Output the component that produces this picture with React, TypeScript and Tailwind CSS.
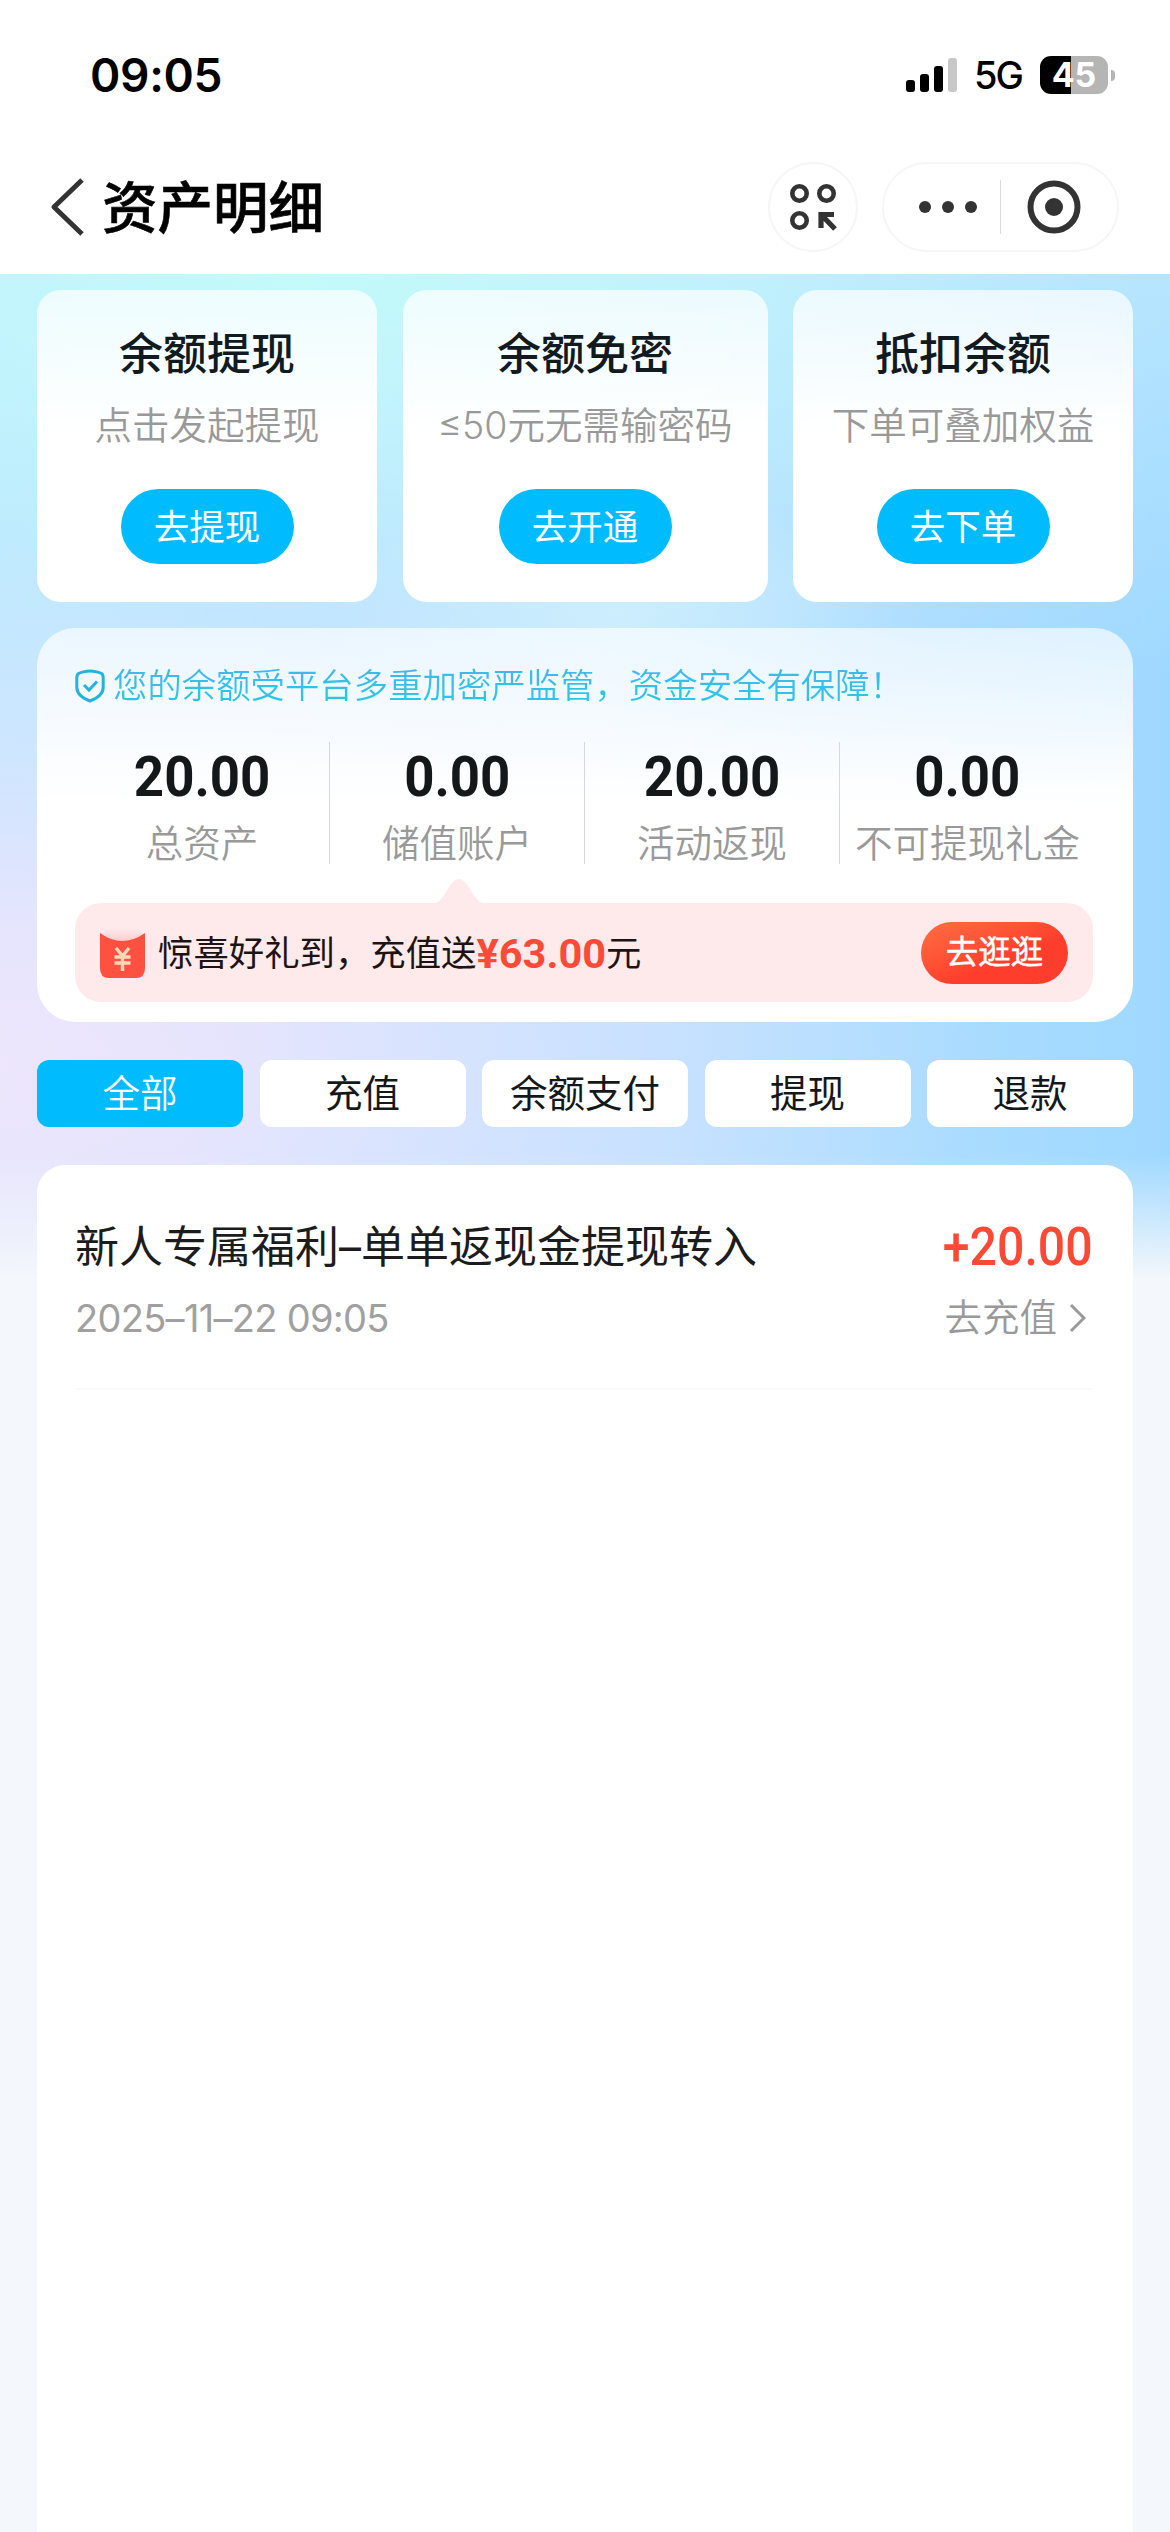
import React, { useState } from "react";

const actions = [
  { title: "余额提现", desc: "点击发起提现", button: "去提现", width: "w-[340px]" },
  { title: "余额免密", desc: "≤50元无需输密码", button: "去开通", width: "w-[365px]" },
  { title: "抵扣余额", desc: "下单可叠加权益", button: "去下单", width: "w-[340px]" },
];

const stats = [
  { value: "20.00", label: "总资产" },
  { value: "0.00", label: "储值账户" },
  { value: "20.00", label: "活动返现" },
  { value: "0.00", label: "不可提现礼金" },
];

const tabs = ["全部", "充值", "余额支付", "提现", "退款"];

const StatusBar = () => {
  return (
    <div className="flex h-[150px] items-center justify-between pl-[90px] pr-[55px]">
      <span className="text-[46px] leading-none font-semibold tracking-[-0.3px]">
        09:05
      </span>
      <div className="flex items-center">
        <svg width="51" height="34" viewBox="0 0 51 34">
          <rect x="0" y="22" width="9" height="12" rx="3" />
          <rect x="14" y="16" width="9" height="18" rx="3" />
          <rect x="28" y="8" width="9" height="26" rx="3" />
          <rect x="42" y="0" width="9" height="34" rx="3" fill="#c8c8c8" />
        </svg>
        <span className="ml-[17px] text-[38px] leading-none font-medium tracking-[-2px]">
          5G
        </span>
        <div className="ml-[18px] flex h-[38px] w-[68px] items-center justify-center rounded-[11px] bg-[linear-gradient(90deg,#000_46%,#b5b5b5_46%)] text-[34px] leading-none font-bold text-white">
          45
        </div>
        <div className="ml-[3px] h-[11px] w-[4px] rounded-r-full bg-[#b5b5b5]" />
      </div>
    </div>
  );
};

const NavBar = () => {
  return (
    <div className="flex h-[124px] items-start pt-[12px] pl-[50px]">
      <svg className="mt-[16px]" width="34" height="58" viewBox="0 0 34 58" fill="none" stroke="#333" strokeWidth="5" strokeLinejoin="round">
        <path d="M32 2L4 29L32 56" />
      </svg>
      <h1 className="ml-[18px] text-[55.5px] leading-[91px] font-medium [-webkit-text-stroke:0.6px_#000]">
        资产明细
      </h1>
      <button className="ml-[444px] flex size-[90px] items-center justify-center rounded-full border-2 border-[#f6f6f6]">
        <svg width="48" height="54" viewBox="0 0 48 54" fill="none" stroke="#333" strokeWidth="4.600">
          <circle cx="10.500" cy="13.500" r="7.200" />
          <circle cx="37.500" cy="13.500" r="7.200" />
          <circle cx="10.500" cy="40.500" r="7.200" />
          <path d="M32 48V34.500H45M33 35.500L46 49" strokeWidth="5.200" />
        </svg>
      </button>
      <div className="ml-[24px] flex h-[90px] w-[237px] items-center rounded-full border-2 border-[#f6f6f6]">
        <div className="flex flex-1 items-center gap-[11px] pl-[35px]">
          <span className="size-[12px] rounded-full bg-[#333]" />
          <span className="size-[12px] rounded-full bg-[#333]" />
          <span className="size-[12px] rounded-full bg-[#333]" />
        </div>
        <div className="h-[54px] w-[1.5px] bg-[#dcdcdc]" />
        <div className="flex w-[116px] items-center pl-[26px]">
          <svg width="54" height="54" viewBox="0 0 54 54">
            <circle cx="27" cy="27" r="23.500" fill="none" stroke="#333" strokeWidth="6" />
            <circle cx="27" cy="27" r="9" fill="#333" />
          </svg>
        </div>
      </div>
    </div>
  );
};

const RedPacket = () => {
  return (
    <svg width="45" height="50" viewBox="0 0 45 50">
      <defs>
        <linearGradient id="flap" x1="0" y1="0" x2="0" y2="1">
          <stop offset="0" stopColor="#feeaeb" />
          <stop offset="1" stopColor="#fbc4c2" />
        </linearGradient>
      </defs>
      <path d="M4 6Q4 0 12 0H33Q41 0 41 6V18H4Z" fill="url(#flap)" />
      <path d="M0 5Q22 21 45 5V40Q45 50 36 50H9Q0 50 0 40Z" fill="#fe5142" />
      <path d="M16 20L22.500 28L29 20M14.500 29H30.500M14.500 35H30.500M22.500 28V43" fill="none" stroke="#fdd9b8" strokeWidth="3.400" />
    </svg>
  );
};

const App = () => {
  const [activeTab, setActiveTab] = useState("全部");

  return (
    <div className="flex h-[2532px] w-[1170px] flex-col overflow-hidden bg-white font-['Inter','Noto_Sans_CJK_SC',sans-serif] text-black">
      <StatusBar />
      <NavBar />

      <div className="flex flex-1 flex-col bg-[#f4f7fb] bg-[linear-gradient(180deg,rgba(244,247,251,0)_0,rgba(244,247,251,0)_880px,#f4f7fb_1005px),radial-gradient(ellipse_980px_540px_at_0px_790px,#ede6fc_0%,rgba(234,228,253,0.9)_25%,rgba(220,226,255,0.55)_58%,rgba(210,225,255,0)_100%),radial-gradient(ellipse_300px_130px_at_620px_340px,rgba(212,243,252,0.7)_0%,rgba(212,243,252,0)_100%),radial-gradient(ellipse_820px_320px_at_300px_0px,#c3fafa_0%,rgba(196,250,250,0.7)_35%,rgba(196,250,250,0)_100%),linear-gradient(180deg,rgba(190,234,255,0.75)_0,rgba(190,234,255,0)_400px),linear-gradient(90deg,#bdeaff_0%,#bde2ff_50%,#9fd8ff_100%)] bg-no-repeat px-[37px] pt-[16px]">
        <div className="flex justify-between">
          {actions.map((item) => (
            <div
              key={item.title}
              className={`${item.width} flex h-[312px] flex-col items-center rounded-[24px] bg-linear-to-b from-white/70 to-white to-45% pt-[34px]`}
            >
              <h2 className="text-[44px] leading-[60px] font-medium text-[#111a1e]">
                {item.title}
              </h2>
              <p className="mt-[14px] text-[37.5px] leading-[56px] font-[350] whitespace-nowrap text-[#999]">
                {item.desc}
              </p>
              <button className="mt-[35px] h-[75px] w-[173px] rounded-full bg-[#00bcff] pt-[2px] text-[35.5px] leading-[73px] text-white">
                {item.button}
              </button>
            </div>
          ))}
        </div>

        <div className="mt-[26px] flex h-[394px] flex-col rounded-[38px] bg-linear-to-b from-white/65 to-white to-45% pt-[34px] pr-[40px] pl-[38px]">
          <div className="flex h-[48px] items-center">
            <svg width="30" height="34" viewBox="0 0 30 34" fill="none" stroke="#22b4dc" strokeWidth="3">
              <path d="M15 2C11 2 5 3.500 3.500 4.500C2 5.500 1.800 6.500 1.800 9V18C1.800 25 8 29.500 15 32C22 29.500 28.200 25 28.200 18V9C28.200 6.500 28 5.500 26.500 4.500C25 3.500 19 2 15 2Z" />
              <path d="M9 16L14 21L22 12.500" />
            </svg>
            <span className="ml-[8px] bg-linear-to-b from-[#45b4f0] to-[#1fcbe0] bg-clip-text text-[34.4px] leading-[50px] font-[350] text-transparent">
              您的余额受平台多重加密严监管，资金安全有保障！
            </span>
          </div>

          <div className="mt-[32px] flex h-[122px] divide-x-[1.5px] divide-[#d6d8da]">
            {stats.map((item) => (
              <div key={item.label} className="flex w-[255px] shrink-0 flex-col items-center">
                <span className="mt-[5px] scale-x-[0.96] font-[Roboto] text-[55px] leading-[60px] font-bold text-[#15181a]">
                  {item.value}
                </span>
                <span className="mt-[9px] text-[37.5px] leading-[56px] font-[350] whitespace-nowrap text-[#999]">
                  {item.label}
                </span>
              </div>
            ))}
          </div>

          <svg className="mt-[15px] ml-[361px] shrink-0" width="46" height="24" viewBox="0 0 46 24">
            <path d="M0 24C8 20 12 8 17 3Q23 -3 29 3C34 8 38 20 46 24Z" fill="#feeaeb" />
          </svg>
          <div className="flex h-[99px] shrink-0 items-center rounded-[26px] bg-[#feeaeb] pr-[25px] pl-[25px]">
            <RedPacket />
            <p className="ml-[13px] flex items-center pt-[2px] text-[35.4px] leading-[50px] text-[#1c1414]">
              惊喜好礼到，充值送
              <b className="font-['Roboto','Noto_Sans_CJK_SC',sans-serif] text-[41.5px] font-bold text-[#fb4a38]">
                ¥63.00
              </b>
              元
            </p>
            <button className="ml-auto h-[62px] w-[147px] rounded-full bg-linear-to-br from-[#ff6d43] to-[#ff3d2c] to-60% text-[32.5px] leading-[62px] text-white [-webkit-text-stroke:0.4px_#fff]">
              去逛逛
            </button>
          </div>
        </div>

        <div className="mt-[38px] flex justify-between">
          {tabs.map((tab) => (
            <button
              key={tab}
              onClick={() => setActiveTab(tab)}
              className={`h-[67px] w-[206px] rounded-[12px] text-[37.5px] leading-[67px] ${
                activeTab === tab ? "bg-[#00bcff] font-[350] text-white" : "bg-white text-[#15181a]"
              }`}
            >
              {tab}
            </button>
          ))}
        </div>

        <div className="mt-[38px] flex-1 rounded-t-[28px] bg-white pt-[52px] pr-[40px] pl-[38px]">
          <div className="flex h-[173px] justify-between border-b-2 border-[#fafafa]">
            <div>
              <p className="text-[44px] leading-[60px] text-[#1c1c1c]">
                新人专属福利–单单返现金提现转入
              </p>
              <p className="mt-[13px] text-[38px] leading-[56px] font-normal tracking-[-0.7px] text-[#a0a0a0]">
                2025–11–22 09:05
              </p>
            </div>
            <div className="flex flex-col items-end">
              <span className="origin-right scale-x-[0.91] font-[Roboto] text-[53px] leading-[60px] font-medium text-[#fa4a35]">
                +20.00
              </span>
              <div className="mt-[13px] flex items-center pr-[7px] text-[37.5px] leading-[56px] font-[350] text-[#999]">
                去充值
                <svg className="ml-[12px]" width="17" height="30" viewBox="0 0 17 30" fill="none" stroke="#999" strokeWidth="3">
                  <path d="M2 2L15 15L2 28" />
                </svg>
              </div>
            </div>
          </div>
        </div>
      </div>
    </div>
  );
};

export default App;
